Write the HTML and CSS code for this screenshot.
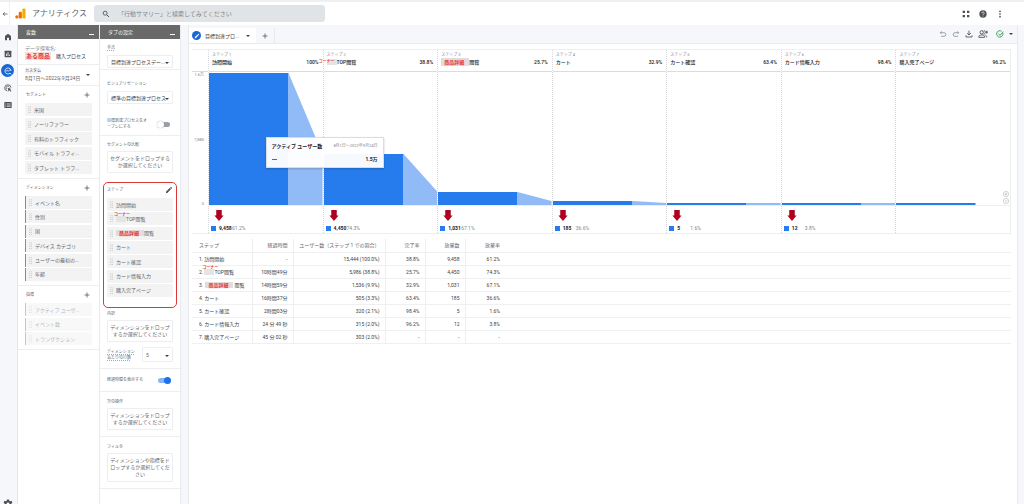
FILE: index.html
```html
<!DOCTYPE html>
<html lang="ja">
<head>
<meta charset="utf-8">
<title>アナリティクス</title>
<link rel="stylesheet" href="styles.css">
</head>
<body>
<svg class="defs" aria-hidden="true">
  <symbol id="plus" viewBox="0 0 24 24"><path d="M12 2v20M2 12h20" fill="none" stroke="currentColor" stroke-width="3"/></symbol>
  <symbol id="grip" viewBox="0 0 8 18"><path d="M1 1h2v2H1zM5 1h2v2H5zM1 6h2v2H1zM5 6h2v2H5zM1 11h2v2H1zM5 11h2v2H5zM1 16h2v2H1zM5 16h2v2H5z" fill="currentColor"/></symbol>
  <symbol id="down" viewBox="0 0 10 12"><path d="M2 0h6v6h2L5 12 0 6h2z" fill="#b00020"/></symbol>
  <symbol id="pencil" viewBox="0 0 24 24"><path d="M3 17.3V21h3.700L17.800 9.900l-3.700-3.700zM20.700 7a1 1 0 0 0 0-1.400l-2.300-2.300a1 1 0 0 0-1.400 0l-1.800 1.800 3.700 3.700z" fill="currentColor"/></symbol>
</svg>
<div class="app">
  <header class="top">
    <button class="icon-btn back" aria-label="戻る"><svg class="i6" viewBox="0 0 24 24"><path d="M22 12H4M11 5l-7 7 7 7" fill="none" stroke="currentColor" stroke-width="3"/></svg></button>
    <div class="brand">
      <svg class="logo" viewBox="0 0 24 24"><rect x="16" y="1" width="7" height="22" rx="3" fill="#f9ab00"/><rect x="8" y="8" width="7" height="15" rx="3" fill="#e8710a"/><circle cx="4" cy="19.500" r="3.500" fill="#e8710a"/></svg>
      <span>アナリティクス</span>
    </div>
    <label class="search">
      <svg class="i8" viewBox="0 0 24 24"><circle cx="9.500" cy="9.500" r="6" fill="none" stroke="currentColor" stroke-width="2.600"/><path d="M14 14l7 7" stroke="currentColor" stroke-width="3"/></svg>
      <input type="search" aria-label="検索" placeholder="「行動サマリー」と検索してみてください">
    </label>
    <nav class="top-actions">
      <button class="icon-btn" aria-label="アプリ"><svg class="i8" viewBox="0 0 24 24"><path d="M2 2h7v7H2zM15 2h7v7h-7zM2 15h7v7H2zM15 15h7v7h-7z" fill="currentColor"/></svg></button>
      <button class="icon-btn" aria-label="ヘルプ"><svg class="i8" viewBox="0 0 24 24"><circle cx="12" cy="12" r="11" fill="currentColor"/><path d="M8.500 9.500a3.500 3.500 0 1 1 5.500 2.800c-1.500 1-2 1.500-2 3" fill="none" stroke="#fff" stroke-width="2.200"/><circle cx="12" cy="18.200" r="1.400" fill="#fff"/></svg></button>
      <button class="icon-btn" aria-label="その他"><svg class="i8" viewBox="0 0 24 24"><circle cx="12" cy="4" r="2.600" fill="currentColor"/><circle cx="12" cy="12" r="2.600" fill="currentColor"/><circle cx="12" cy="20" r="2.600" fill="currentColor"/></svg></button>
    </nav>
  </header>

  <div class="body">
    <nav class="rail">
      <button class="icon-btn" aria-label="ホーム"><svg class="i8" viewBox="0 0 24 24"><path d="M12 2L3 9v13h6v-8h6v8h6V9z" fill="currentColor"/></svg></button>
      <button class="icon-btn" aria-label="レポート"><svg class="i8" viewBox="0 0 24 24"><rect x="2" y="2" width="20" height="20" rx="2" fill="currentColor"/><path d="M7.500 18v-7M12 18V6M16.500 18v-4" stroke="#fff" stroke-width="2.400"/></svg></button>
      <button class="icon-btn current" aria-label="探索"><svg class="i8" viewBox="0 0 24 24"><path d="M21 12a9 9 0 1 0-3 6.700L22 22" fill="none" stroke="currentColor" stroke-width="2.400"/><path d="M6 13l4-3 3 3 7-7" fill="none" stroke="currentColor" stroke-width="2.400"/></svg></button>
      <button class="icon-btn" aria-label="広告"><svg class="i8" viewBox="0 0 24 24"><path d="M10 21A9.500 9.500 0 1 1 21 11" fill="none" stroke="currentColor" stroke-width="2.400"/><path d="M9 16a5 5 0 1 1 7-6" fill="none" stroke="currentColor" stroke-width="2.400"/><path d="M11 11l11 4-4 2 4 4-2 2-4-4-2 4z" fill="currentColor"/></svg></button>
      <button class="icon-btn" aria-label="設定"><svg class="i8" viewBox="0 0 24 24"><rect x="1" y="3" width="22" height="18" rx="2" fill="currentColor"/><path d="M4 8.500h3M9 8.500h11M4 12.500h3M9 12.500h11M4 16.500h3M9 16.500h11" stroke="#f5f7fa" stroke-width="1.800"/></svg></button>
      <button class="icon-btn admin" aria-label="管理"><svg class="i10" viewBox="0 0 24 24"><circle cx="12" cy="12" r="6" fill="none" stroke="currentColor" stroke-width="5"/><path d="M12 1v4M12 19v4M2.500 6.500l3.500 2M18 15.500l3.500 2M2.500 17.500l3.500-2M18 8.500l3.500-2" stroke="currentColor" stroke-width="5"/></svg></button>
    </nav>

    <section class="panel variables">
      <header class="panel-head"><h2>変数</h2><button class="minimize" aria-label="最小化"></button></header>
      <div class="block name">
        <span class="caption">データ探索名:</span>
        <p><mark class="mask big">ある商品</mark> 購入プロセス</p>
      </div>
      <div class="block dates">
        <button class="date"><span><small>カスタム</small>8月1日～2022年9月24日</span><i class="caret"></i></button>
      </div>
      <div class="block group">
        <div class="title"><h3>セグメント</h3><button class="icon-btn" aria-label="セグメントを追加"><svg class="i6"><use href="#plus"/></svg></button></div>
        <div class="list five">
          <button class="chip"><svg><use href="#grip"/></svg>米国</button>
          <button class="chip"><svg><use href="#grip"/></svg>ノーリファラー</button>
          <button class="chip"><svg><use href="#grip"/></svg>有料のトラフィック</button>
          <button class="chip"><svg><use href="#grip"/></svg>モバイル トラフィ...</button>
          <button class="chip"><svg><use href="#grip"/></svg>タブレット トラフ...</button>
        </div>
      </div>
      <div class="block group">
        <div class="title"><h3>ディメンション</h3><button class="icon-btn" aria-label="ディメンションを追加"><svg class="i6"><use href="#plus"/></svg></button></div>
        <div class="list six">
          <button class="chip dim"><svg><use href="#grip"/></svg>イベント名</button>
          <button class="chip dim"><svg><use href="#grip"/></svg>性別</button>
          <button class="chip dim"><svg><use href="#grip"/></svg>国</button>
          <button class="chip dim"><svg><use href="#grip"/></svg>デバイス カテゴリ</button>
          <button class="chip dim"><svg><use href="#grip"/></svg>ユーザーの最初の...</button>
          <button class="chip dim"><svg><use href="#grip"/></svg>年齢</button>
        </div>
      </div>
      <div class="block group">
        <div class="title"><h3>指標</h3><button class="icon-btn" aria-label="指標を追加"><svg class="i6"><use href="#plus"/></svg></button></div>
        <div class="list three">
          <button class="chip metric"><svg><use href="#grip"/></svg>アクティブ ユーザ...</button>
          <button class="chip metric"><svg><use href="#grip"/></svg>イベント数</button>
          <button class="chip metric"><svg><use href="#grip"/></svg>トランザクション</button>
        </div>
      </div>
    </section>

    <section class="panel settings">
      <header class="panel-head"><h2>タブの設定</h2><button class="minimize" aria-label="最小化"></button></header>
      <div class="block method">
        <label class="label" for="method"><span class="hint">手法</span></label>
        <div class="select"><select id="method"><option>目標到達プロセスデー...</option></select></div>
      </div>
      <div class="block visual">
        <label class="label" for="visual">ビジュアリゼーション</label>
        <div class="select"><select id="visual"><option>標準の目標到達プロセス</option></select></div>
        <label class="switch-row open"><span>目標到達プロセスをオ<br>ープンにする</span><input class="switch" type="checkbox"></label>
      </div>
      <div class="block compare">
        <h3 class="label">セグメントの比較</h3>
        <button class="drop">セグメントをドロップする<br>か選択してください</button>
        <div class="steps">
          <div class="title"><h3>ステップ</h3><button class="icon-btn" aria-label="ステップを編集"><svg class="i8"><use href="#pencil"/></svg></button></div>
          <div class="list seven">
            <button class="chip"><svg><use href="#grip"/></svg>訪問開始</button>
            <button class="chip"><svg><use href="#grip"/></svg><span class="corner"><b>コーナー</b></span>TOP閲覧</button>
            <button class="chip"><svg><use href="#grip"/></svg><mark class="mask">商品詳細</mark>閲覧</button>
            <button class="chip"><svg><use href="#grip"/></svg>カート</button>
            <button class="chip"><svg><use href="#grip"/></svg>カート確認</button>
            <button class="chip"><svg><use href="#grip"/></svg>カード情報入力</button>
            <button class="chip"><svg><use href="#grip"/></svg>購入完了ページ</button>
          </div>
        </div>
        <h3 class="label">内訳</h3>
        <button class="drop">ディメンションをドロップ<br>するか選択してください</button>
        <div class="rows">
          <label class="hint" for="rows">ディメンション<br>あたりの行数</label>
          <div class="select"><select id="rows"><option>5</option></select></div>
        </div>
      </div>
      <div class="block elapsed">
        <label class="switch-row"><span>経過時間を表示する</span><input class="switch" type="checkbox" checked></label>
      </div>
      <div class="block next">
        <h3 class="label">次の操作</h3>
        <button class="drop">ディメンションをドロップ<br>するか選択してください</button>
      </div>
      <div class="block next">
        <h3 class="label">フィルタ</h3>
        <button class="drop">ディメンションや指標をド<br>ロップするか選択してくだ<br>さい</button>
      </div>
    </section>

    <main class="main">
      <div class="tabs">
        <button class="tab"><span class="edit"><svg class="i6"><use href="#pencil"/></svg></span>目標到達プロ...<i class="caret"></i></button>
        <button class="icon-btn add" aria-label="タブを追加"><svg class="i6"><use href="#plus"/></svg></button>
        <div class="tools">
          <button class="icon-btn faint" aria-label="元に戻す"><svg class="i8" viewBox="0 0 24 24"><path d="M8 4L4 8l4 4M4 8h11a5 5 0 0 1 0 11H6" fill="none" stroke="currentColor" stroke-width="2.200"/></svg></button>
          <button class="icon-btn faint" aria-label="やり直す"><svg class="i8" viewBox="0 0 24 24"><path d="M16 4l4 4-4 4M20 8H9a5 5 0 0 0 0 11h9" fill="none" stroke="currentColor" stroke-width="2.200"/></svg></button>
          <button class="icon-btn" aria-label="ダウンロード"><svg class="i8" viewBox="0 0 24 24"><path d="M12 2v13M6.500 9.500L12 15l5.500-5.500M3 16v5h18v-5" fill="none" stroke="currentColor" stroke-width="2.600"/></svg></button>
          <button class="icon-btn" aria-label="共有"><svg class="i10" viewBox="0 0 24 24"><circle cx="9" cy="8" r="4" fill="none" stroke="currentColor" stroke-width="2.200"/><path d="M2 20v-2c0-5 14-5 14 0v2zM14 4c5 0 5 8 0 8M18 15c2 1 3 2 3 5M21 4v7M18 7.500h6" fill="none" stroke="currentColor" stroke-width="2.200"/></svg></button>
          <button class="icon-btn ok" aria-label="データの状態"><svg class="i8" viewBox="0 0 24 24"><path d="M20.500 9A9.500 9.500 0 1 1 17 4" fill="none" stroke="currentColor" stroke-width="2.400"/><path d="M7 11l5 5L22 5" fill="none" stroke="currentColor" stroke-width="2.400"/></svg><i class="caret"></i></button>
        </div>
      </div>

      <div class="sheet">
        <div class="chart">
          <div class="axis"><span>1.6万</span><span>7,880</span><span>0</span></div>
          <section class="step">
            <header><small>ステップ 1</small><div><h4>訪問開始</h4><b>100%</b></div></header>
            <svg class="plot" viewBox="0 0 100 132" preserveAspectRatio="none"><path class="bar" d="M0 0H70V132H0z"/><path class="fall" d="M70 0L100 81V132H70z"/></svg>
            <footer><svg class="arrow"><use href="#down"/></svg><p><b>9,458</b><span>61.2%</span></p></footer>
          </section>
          <section class="step">
            <header><small>ステップ 2</small><div><h4><span class="corner"><b>コーナー</b></span>TOP閲覧</h4><b>38.8%</b></div></header>
            <svg class="plot" viewBox="0 0 100 132" preserveAspectRatio="none"><path class="bar" d="M0 81H70V132H0z"/><path class="fall" d="M70 81L100 119V132H70z"/></svg>
            <footer><svg class="arrow"><use href="#down"/></svg><p><b>4,450</b><span>74.3%</span></p></footer>
          </section>
          <section class="step">
            <header><small>ステップ 3</small><div><h4><mark class="mask">商品詳細</mark>閲覧</h4><b>25.7%</b></div></header>
            <svg class="plot" viewBox="0 0 100 132" preserveAspectRatio="none"><path class="bar" d="M0 119H70V132H0z"/><path class="fall" d="M70 119L100 128V132H70z"/></svg>
            <footer><svg class="arrow"><use href="#down"/></svg><p><b>1,031</b><span>67.1%</span></p></footer>
          </section>
          <section class="step">
            <header><small>ステップ 4</small><div><h4>カート</h4><b>32.9%</b></div></header>
            <svg class="plot" viewBox="0 0 100 132" preserveAspectRatio="none"><path class="bar" d="M0 128H70V132H0z"/><path class="fall" d="M70 128L100 130V132H70z"/></svg>
            <footer><svg class="arrow"><use href="#down"/></svg><p><b>185</b><span>36.6%</span></p></footer>
          </section>
          <section class="step">
            <header><small>ステップ 5</small><div><h4>カート確認</h4><b>63.4%</b></div></header>
            <svg class="plot" viewBox="0 0 100 132" preserveAspectRatio="none"><path class="bar" d="M0 130H70V132H0z"/><path class="fall" d="M70 130H100V132H70z"/></svg>
            <footer><svg class="arrow"><use href="#down"/></svg><p><b>5</b><span>1.6%</span></p></footer>
          </section>
          <section class="step">
            <header><small>ステップ 6</small><div><h4>カード情報入力</h4><b>98.4%</b></div></header>
            <svg class="plot" viewBox="0 0 100 132" preserveAspectRatio="none"><path class="bar" d="M0 130H70V132H0z"/><path class="fall" d="M70 130H100V132H70z"/></svg>
            <footer><svg class="arrow"><use href="#down"/></svg><p><b>12</b><span>3.8%</span></p></footer>
          </section>
          <section class="step">
            <header><small>ステップ 7</small><div><h4>購入完了ページ</h4><b>96.2%</b></div></header>
            <svg class="plot" viewBox="0 0 100 132" preserveAspectRatio="none"><path class="bar" d="M0 130H70V132H0z"/></svg>
            <footer></footer>
          </section>
          <div class="tooltip">
            <div><b>アクティブ ユーザー数</b><span>8月1日～2022年9月24日</span></div>
            <div><i class="dash"></i><b>1.5万</b></div>
          </div>
          <div class="zoomer">
            <button class="icon-btn" aria-label="拡大"><svg class="i6" viewBox="0 0 24 24"><circle cx="12" cy="12" r="10.500" fill="none" stroke="currentColor" stroke-width="2"/><path d="M12 7v10M7 12h10" stroke="currentColor" stroke-width="2.400"/></svg></button>
            <button class="icon-btn" aria-label="縮小"><svg class="i6" viewBox="0 0 24 24"><circle cx="12" cy="12" r="10.500" fill="none" stroke="currentColor" stroke-width="2"/><path d="M7 12h10" stroke="currentColor" stroke-width="2.400"/></svg></button>
          </div>
        </div>

        <table class="data">
          <colgroup><col class="c-step"><col class="c-time"><col class="c-users"><col class="c-num"><col class="c-num"><col class="c-num"><col></colgroup>
          <thead><tr><th>ステップ</th><th>経過時間</th><th>ユーザー数（ステップ 1 での割合）</th><th>完了率</th><th>放棄数</th><th>放棄率</th><th></th></tr></thead>
          <tbody>
            <tr><td>1. 訪問開始</td><td>-</td><td>15,444 (100.0%)</td><td>38.8%</td><td>9,458</td><td>61.2%</td><td></td></tr>
            <tr><td>2. <span class="corner"><b>コーナー</b></span>TOP閲覧</td><td>10時間49分</td><td>5,986 (38.8%)</td><td>25.7%</td><td>4,450</td><td>74.3%</td><td></td></tr>
            <tr><td>3. <mark class="mask">商品詳細</mark>閲覧</td><td>14時間59分</td><td>1,536 (9.9%)</td><td>32.9%</td><td>1,031</td><td>67.1%</td><td></td></tr>
            <tr><td>4. カート</td><td>16時間37分</td><td>505 (3.3%)</td><td>63.4%</td><td>185</td><td>36.6%</td><td></td></tr>
            <tr><td>5. カート確認</td><td>2時間03分</td><td>320 (2.1%)</td><td>98.4%</td><td>5</td><td>1.6%</td><td></td></tr>
            <tr><td>6. カード情報入力</td><td>24 分 49 秒</td><td>315 (2.0%)</td><td>96.2%</td><td>12</td><td>3.8%</td><td></td></tr>
            <tr><td>7. 購入完了ページ</td><td>45 分 02 秒</td><td>303 (2.0%)</td><td>-</td><td>-</td><td>-</td><td></td></tr>
          </tbody>
        </table>
      </div>
    </main>
  </div>
</div>
</body>
</html>
```
FILE: styles.css
```css
* { box-sizing: border-box; }

body {
  margin: 0;
  font: 5px/6px Roboto, "Noto Sans CJK JP", sans-serif;
  color: #3c4043;
  background: #f5f7fa;
}

button, input, select { font: inherit; color: inherit; margin: 0; padding: 0; border: 0; background: none; }
button { text-align: left; cursor: pointer; }
h2, h3, h4, p { margin: 0; font-size: inherit; font-weight: 400; }
svg { display: block; flex: none; }
.defs { position: absolute; width: 0; height: 0; }

.i6 { width: 6px; height: 6px; }
.i8 { width: 8px; height: 8px; }
.i10 { width: 10px; height: 10px; }
.icon-btn { display: flex; align-items: center; justify-content: center; color: #4d5156; }
.caret { flex: none; border: 2px solid transparent; border-top-color: #3c4043; border-bottom: 0; }

.app { height: 100vh; display: flex; flex-direction: column; overflow: hidden; }

/* Header */
.top {
  height: 25px;
  display: flex;
  align-items: center;
  flex: none;
  background: #fff;
  border-top: 2px solid #eef0f2;
}
.back { width: 10px; height: 23px; border-right: 1px solid #eef0f2; }
.brand { display: flex; align-items: center; gap: 6px; width: 84px; padding-left: 5px; font-size: 8px; line-height: 12px; color: #5f6368; white-space: nowrap; }
.logo { width: 11px; height: 11px; }
.search { display: flex; align-items: center; gap: 8px; width: 231px; height: 17px; padding: 0 8px; border-radius: 3px; background: #e1e4e7; color: #4d5156; }
.search input { flex: 1; min-width: 0; height: 12px; font-size: 6px; outline: 0; appearance: none; }
.search input::placeholder { color: #80868b; }
.top-actions { display: flex; gap: 9px; margin-left: auto; padding-right: 20px; color: #3c4043; }

.body { flex: 1; min-height: 0; display: flex; }

/* Navigation rail */
.rail { width: 18px; flex: none; display: flex; flex-direction: column; align-items: center; gap: 4px; padding: 5px 2px 0 0; overflow: hidden; border-right: 1px solid #e4e7ea; }
.rail .icon-btn { width: 13px; height: 13px; flex: none; }
.rail .current { border-radius: 50%; background: #1967d2; color: #fff; }
.rail .admin { margin: auto 0 -6px; }

/* Panels */
.panel { flex: none; background: #fff; border-right: 1px solid #e8eaed; overflow: hidden; }
.variables { width: 82px; }
.settings { width: 81px; }
.panel-head { display: flex; align-items: center; justify-content: space-between; height: 14px; padding: 0 5px 0 8px; background: #696969; color: #fff; font-weight: 500; }
.minimize { width: 5px; height: 5px; border-bottom: 1px solid #fff; }
.block { border-bottom: 1px solid #eceef0; padding: 0 7px; }

.name { padding-top: 6px; padding-bottom: 3px; }
.caption { display: block; color: #80868b; }
.name p { display: flex; align-items: center; gap: 5px; line-height: 10px; }
.dates { padding-top: 3px; padding-bottom: 3px; }
.date { display: flex; align-items: center; justify-content: space-between; width: 100%; line-height: 8px; padding-right: 2px; color: #5f6368; white-space: nowrap; }
.date small { display: block; width: 16px; font-size: 4px; line-height: 6px; background: #f1f3f4; color: #5f6368; }

.title { display: flex; align-items: center; justify-content: space-between; height: 10px; margin-bottom: 3px; font-size: 4px; color: #5f6368; }
.group { padding-top: 4px; padding-bottom: 4px; }
.group .title { padding: 0 2px 0 1px; }
.list { display: flex; flex-direction: column; justify-content: space-between; }
.five { min-height: 71px; }
.six { min-height: 85px; }
.three { min-height: 42px; }
.seven { min-height: 99px; }
.chip { display: flex; align-items: center; height: 13px; padding-left: 3px; border-radius: 1px; background: #f3f3f3; color: #5f6368; white-space: nowrap; }
.chip > svg { width: 3px; height: 7px; margin-right: 3px; color: #a5a9ad; }
.dim { border-left: 1px solid #4caf6a; border-radius: 0; }
.metric { border-left: 1px solid #a9cdf0; border-radius: 0; color: #b4b8bc; background: #f8f8f8; }
.metric > svg { color: #d0d3d6; }

.mask { color: #e53935; background: #e4dcdc; font-weight: 700; padding: 0 5px 0 3px; }
.mask.big { font-size: 6px; line-height: 8px; padding: 0 1px; background: #f7dedb; }
.corner { position: relative; display: inline-block; flex: none; width: 10px; height: 6px; background: #e4e4e4; vertical-align: top; }
.corner b { position: absolute; left: -2px; top: -4px; font-size: 4px; line-height: 5px; font-weight: 700; color: #e53935; white-space: nowrap; }

/* Tab settings */
.label { display: block; margin-bottom: 3px; font-size: 4px; line-height: 6px; color: #5f6368; }
.hint { text-decoration: underline dotted #a5a9ad; text-underline-offset: 1px; }
.method { padding-top: 6px; padding-bottom: 1px; }
.method .label, .visual .label { margin-bottom: 4px; }
.select { position: relative; }
.select select { display: block; width: 100%; height: 13px; padding: 0 3px; border: 1px solid #eceef0; border-radius: 1px; appearance: none; }
.select::after { content: ""; position: absolute; right: 4px; top: 50%; border: 2px solid transparent; border-top-color: #3c4043; border-bottom: 0; }
.visual { padding-top: 11px; padding-bottom: 5px; }
.switch-row { display: flex; align-items: center; justify-content: space-between; font-size: 4px; line-height: 6px; color: #5f6368; }
.open { margin-top: 14px; }
.switch { position: relative; width: 12px; height: 5px; margin-right: 3px; border-radius: 3px; background: #9aa0a6; appearance: none; }
.switch::before { content: ""; position: absolute; left: -1px; top: -1px; width: 7px; height: 7px; border-radius: 50%; background: #fff; box-shadow: 0 0 1px #80868b; }
.switch:checked { background: #8ab4f8; }
.switch:checked::before { left: auto; right: -1px; background: #1a73e8; box-shadow: none; }
.compare { padding-top: 6px; padding-bottom: 6px; }
.drop { display: block; width: 100%; padding: 3px 0; border: 1px solid #eceef0; border-radius: 1px; line-height: 7px; text-align: center; color: #5f6368; white-space: nowrap; }
.steps { margin: 9px -4px 3px; padding: 2px 3px 10px; border: 1px solid #d93a36; border-radius: 5px; }
.rows { display: flex; align-items: center; justify-content: space-between; margin-top: 5px; font-size: 4px; color: #5f6368; }
.rows .select { width: 31px; font-size: 5px; }
.rows select { height: 15px; }
.elapsed { padding-top: 7px; padding-bottom: 7px; }
.elapsed .switch-row { height: 8px; }
.next { padding-top: 7px; padding-bottom: 6px; }

/* Report area */
.main { flex: 1; min-width: 0; display: flex; flex-direction: column; margin: 0 6px 0 7px; border: 1px solid #e8eaed; border-top: 0; border-bottom: 0; }
.tabs { display: flex; height: 19px; padding-top: 3px; flex: none; border-bottom: 1px solid #e8eaed; }
.tab { display: flex; align-items: center; width: 67px; padding: 0 6px 0 3px; background: #fff; white-space: nowrap; }
.tab .caret { margin-left: auto; }
.edit { display: flex; align-items: center; justify-content: center; width: 9px; height: 9px; margin-right: 4px; border-radius: 50%; background: #1967d2; color: #fff; }
.add { width: 19px; border-right: 1px solid #e8eaed; }
.tools { display: flex; align-items: center; gap: 5px; margin-left: auto; padding: 0 4px 3px 0; }
.faint { color: #80868b; }
.ok { gap: 5px; margin-left: 3px; color: #1e8e3e; }
.sheet { flex: 1; padding: 5px 6px 0 3px; background: #fff; }

.chart { position: relative; display: grid; grid-template-columns: 16px repeat(7, 1fr); border: 1px solid #eceef0; border-left: 0; }
.axis { display: flex; flex-direction: column; justify-content: space-between; height: 136px; margin-top: 21px; padding-right: 4px; font-size: 4px; text-align: right; color: #80868b; border-top: 1px solid #dadce0; }
.step { min-width: 0; border-left: 1px dotted #d5d8db; }
.step header { height: 22px; padding: 2px 4px 0 3px; border-bottom: 1px solid #dadce0; }
.step small { display: block; font-size: 4px; line-height: 6px; color: #80868b; }
.step header div { display: flex; justify-content: space-between; line-height: 8px; color: #202124; }
.step h4 { display: flex; align-items: center; font-weight: 500; white-space: nowrap; }
.step header b { font-weight: 500; }
.step .corner b { left: -8px; top: 0; }
.plot { width: 100%; height: 132px; margin-top: 1px; }
.bar { fill: #267cec; }
.fall { fill: #90bbf6; }
.step footer { height: 28px; padding: 4px 0 0 2px; border-top: 1px solid #eceef0; }
.arrow { width: 10px; height: 11px; margin-left: 3px; }
.step p { display: flex; align-items: center; margin-top: 4px; color: #80868b; }
.step p::before { content: ""; width: 5px; height: 5px; margin-right: 3px; background: #267cec; }
.step p b { min-width: 13px; font-weight: 700; color: #202124; }

.tooltip { position: absolute; left: 9%; top: 87px; width: 118px; display: grid; gap: 7px; padding: 5px; border: 1px solid #dadce0; background: rgba(255, 255, 255, .96); box-shadow: 0 1px 2px rgba(0, 0, 0, .2); white-space: nowrap; }
.tooltip div { display: flex; align-items: center; justify-content: space-between; }
.tooltip b { font-weight: 700; color: #202124; }
.tooltip span { font-size: 4px; color: #80868b; }
.dash { width: 5px; height: 1px; background: #1a73e8; }
.zoomer { position: absolute; right: 1px; top: 141px; display: grid; gap: 1px; }
.zoomer .icon-btn { color: #a5a9ad; }

.data { width: 100%; margin-top: 5px; border-collapse: collapse; table-layout: fixed; }
.data th, .data td { height: 13px; padding: 0 5px; border-bottom: 1px solid #eef0f2; border-right: 1px solid #eceef0; text-align: right; font-weight: 400; white-space: nowrap; }
.data th { color: #5f6368; }
.data th:first-child, .data td:first-child { text-align: left; padding: 0 0 0 7px; }
.data th:nth-child(n+6), .data td:nth-child(n+6) { border-right: 0; }
.data .mask { margin: 0 1px; }
.c-step { width: 60px; }
.c-time { width: 41px; }
.c-users { width: 92px; }
.c-num { width: 40px; }
```
